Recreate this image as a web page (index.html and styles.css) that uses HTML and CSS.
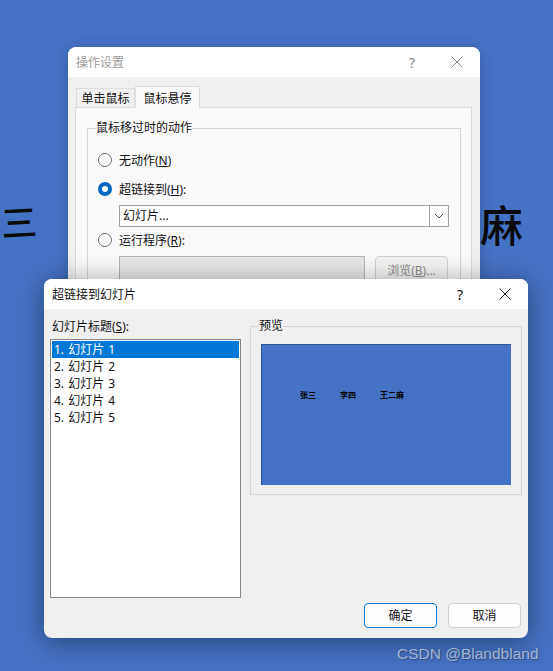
FILE: index.html
```html
<!DOCTYPE html>
<html lang="zh-CN">
<head>
    <meta charset="UTF-8">
    <meta name="viewport" content="width=device-width, initial-scale=1.0">
    <title>超链接到幻灯片</title>
    <link rel="stylesheet" href="styles.css">
</head>
<body>
    <div class="desktop">
        <div class="slide-word word-left">三</div>
        <div class="slide-word word-right">麻</div>

        <div class="window window-back">
            <div class="titlebar titlebar-muted">
                <span class="title">操作设置</span>
                <span class="help">?</span>
                <svg class="close" width="12" height="12" viewBox="0 0 12 12"><path d="M0.5 0.5L11.5 11.5M11.5 0.5L0.5 11.5"/></svg>
            </div>
            <div class="back-body">
                <div class="tabs">
                    <div class="tab">单击鼠标</div>
                    <div class="tab tab-active">鼠标悬停</div>
                </div>
                <div class="tab-panel">
                    <fieldset class="group group-action">
                        <legend>鼠标移过时的动作</legend>
                        <div class="radio-row row-none"><span class="radio"></span>无动作(<u>N</u>)</div>
                        <div class="radio-row row-link"><span class="radio radio-on"></span>超链接到(<u>H</u>):</div>
                        <div class="combo">
                            <span class="combo-text">幻灯片...</span>
                            <span class="combo-btn">
                                <svg width="10" height="6" viewBox="0 0 10 6"><path d="M1 1L5 5L9 1"/></svg>
                            </span>
                        </div>
                        <div class="radio-row row-run"><span class="radio"></span>运行程序(<u>R</u>):</div>
                        <div class="program-row">
                            <div class="program-input"></div>
                            <div class="browse-btn">浏览(<u>B</u>)...</div>
                        </div>
                    </fieldset>
                </div>
            </div>
        </div>

        <div class="window window-front">
            <div class="titlebar">
                <span class="title">超链接到幻灯片</span>
                <span class="help">?</span>
                <svg class="close" width="12" height="12" viewBox="0 0 12 12"><path d="M0.5 0.5L11.5 11.5M11.5 0.5L0.5 11.5"/></svg>
            </div>
            <div class="front-body">
                <div class="columns">
                    <div class="list-col">
                        <div class="list-label">幻灯片标题(<u>S</u>):</div>
                        <ul class="listbox">
                            <li class="selected">1. 幻灯片 1</li>
                            <li>2. 幻灯片 2</li>
                            <li>3. 幻灯片 3</li>
                            <li>4. 幻灯片 4</li>
                            <li>5. 幻灯片 5</li>
                        </ul>
                    </div>
                    <fieldset class="group group-preview">
                        <legend>预览</legend>
                        <div class="preview">
                            <span class="mini">张三</span>
                            <span class="mini">李四</span>
                            <span class="mini">王二麻</span>
                        </div>
                    </fieldset>
                </div>
                <div class="actions">
                    <button class="btn btn-default">确定</button>
                    <button class="btn">取消</button>
                </div>
            </div>
        </div>

        <div class="watermark">CSDN @Blandbland</div>
    </div>
</body>
</html>
```

FILE: styles.css
```css
* {
    box-sizing: border-box;
    margin: 0;
    padding: 0;
}

body {
    font-family: "Noto Sans", "Noto Sans CJK SC", sans-serif;
    font-size: 12px;
    color: #111;
}

.desktop {
    position: relative;
    width: 553px;
    height: 671px;
    overflow: hidden;
    background: #4472c4;
}

.slide-word {
    position: absolute;
    font-family: "Noto Sans CJK SC", sans-serif;
    color: #0a0a0a;
    line-height: 1;
}

.word-left {
    left: 1px;
    top: 202px;
    font-size: 36px;
    font-weight: 500;
    transform: rotate(-3deg);
}

.word-right {
    left: 480px;
    top: 202px;
    font-size: 43px;
    font-weight: 500;
}

.window {
    position: absolute;
    overflow: hidden;
    border-radius: 8px;
    background: #f0f0f0;
}

.window-back {
    left: 68px;
    top: 47px;
    width: 412px;
    height: 260px;
    box-shadow: 0 2px 14px rgba(0, 0, 0, 0.2);
}

.window-front {
    left: 44px;
    top: 279px;
    width: 484px;
    height: 359px;
    overflow: visible;
    box-shadow: 0 4px 28px rgba(0, 0, 0, 0.42);
}

.titlebar {
    display: flex;
    align-items: center;
    height: 30px;
    padding-left: 8px;
    background: #fff;
    border-radius: 8px 8px 0 0;
}

.title {
    flex: 1;
    margin-top: -1px;
}

.help {
    width: 40px;
    margin-right: 19px;
    font-size: 14px;
    text-align: center;
}

.close {
    margin: 0 17px 0 0;
    fill: none;
    stroke: #222;
    stroke-width: 1;
}

.titlebar-muted .title {
    color: #9c9c9c;
}

.titlebar-muted .help {
    color: #8a8a8a;
}

.titlebar-muted .close {
    stroke: #8a8a8a;
}

.back-body {
    padding: 9px 8px 0 7px;
}

.tabs {
    position: relative;
    z-index: 1;
    display: flex;
    align-items: flex-end;
    height: 21px;
    margin-left: 1px;
}

.tab {
    display: flex;
    align-items: center;
    justify-content: center;
    width: 59px;
    height: 19px;
    background: #f0f0f0;
    border: 1px solid #dcdcdc;
    border-bottom: none;
}

.tab-active {
    width: 65px;
    height: 22px;
    margin-bottom: -1px;
    background: #f9f9f9;
    border-left: 1px solid #e2e2e2;
}

.tab-panel {
    height: 220px;
    padding: 12px 10px 0 11px;
    background: #f9f9f9;
    border: 1px solid #dcdcdc;
}

.group {
    border: 1px solid #d6d6d6;
}

.group legend {
    line-height: 16px;
}

.group-action {
    height: 200px;
    padding: 0 10px;
}

.group-action legend {
    margin-left: -2px;
}

.radio-row {
    display: flex;
    align-items: center;
    height: 16px;
}

.row-none {
    margin-top: 16px;
}

.row-link {
    margin-top: 13px;
}

.row-run {
    margin-top: 5px;
}

.radio {
    width: 14px;
    height: 14px;
    margin-right: 7px;
    background: #fff;
    border: 1px solid #6e6e6e;
    border-radius: 50%;
}

.radio-on {
    border: 4px solid #0067c0;
}

.combo {
    display: flex;
    width: 330px;
    height: 22px;
    margin: 8px 0 0 21px;
    background: #fff;
    border: 1px solid #a0a0a0;
}

.combo-text {
    flex: 1;
    padding-left: 3px;
    line-height: 20px;
}

.combo-btn {
    display: flex;
    align-items: center;
    justify-content: center;
    width: 19px;
    border-left: 1px solid #a0a0a0;
}

.combo-btn svg {
    fill: none;
    stroke: #444;
}

.program-row {
    display: flex;
    gap: 10px;
    margin: 8px 0 0 21px;
}

.program-input {
    width: 246px;
    height: 30px;
    background: #e6e6e6;
    border: 1px solid #b4b4b4;
}

.browse-btn {
    width: 73px;
    height: 28px;
    padding-top: 4px;
    color: #8c8c8c;
    text-align: center;
    background: #f4f4f4;
    border: 1px solid #d2d2d2;
    border-radius: 4px;
}

.front-body {
    display: flex;
    flex-direction: column;
    height: 329px;
    padding: 10px 6px;
}

.columns {
    display: flex;
    gap: 9px;
}

.list-col {
    width: 191px;
}

.list-label {
    height: 20px;
    padding-left: 2px;
    line-height: 16px;
}

.listbox {
    height: 259px;
    padding: 1px;
    list-style: none;
    background: #fff;
    border: 1px solid #828790;
}

.listbox li {
    height: 17px;
    padding-left: 2px;
    line-height: 17px;
    word-spacing: 1px;
}

.listbox .selected {
    color: #fff;
    background: #0078d7;
}

.group-preview {
    width: 272px;
    height: 177px;
    margin-top: -1px;
    padding: 10px 10px 0;
}

.group-preview legend {
    margin-left: -2px;
}

.preview {
    display: flex;
    align-items: center;
    width: 250px;
    height: 141px;
    padding: 0 0 42px 38px;
    gap: 24px;
    background: #4472c4;
    border-top: 1px solid #2f5597;
    border-left: 1px solid #2f5597;
}

.mini {
    font-family: "Noto Sans CJK SC", sans-serif;
    font-size: 8px;
    font-weight: 700;
    color: #000;
}

.actions {
    display: flex;
    justify-content: flex-end;
    gap: 11px;
    margin-top: auto;
    padding-right: 1px;
}

.btn {
    width: 73px;
    height: 25px;
    font: inherit;
    line-height: 20px;
    color: #111;
    background: #fdfdfd;
    border: 1px solid #d0d0d0;
    border-radius: 4px;
}

.btn-default {
    border-color: #0078d4;
}

.watermark {
    position: absolute;
    left: 397px;
    top: 645px;
    font-family: "Liberation Sans", sans-serif;
    font-size: 15.5px;
    color: rgba(255, 255, 255, 0.55);
    text-shadow: 1px 1px 1px rgba(0, 0, 0, 0.3);
}
```
